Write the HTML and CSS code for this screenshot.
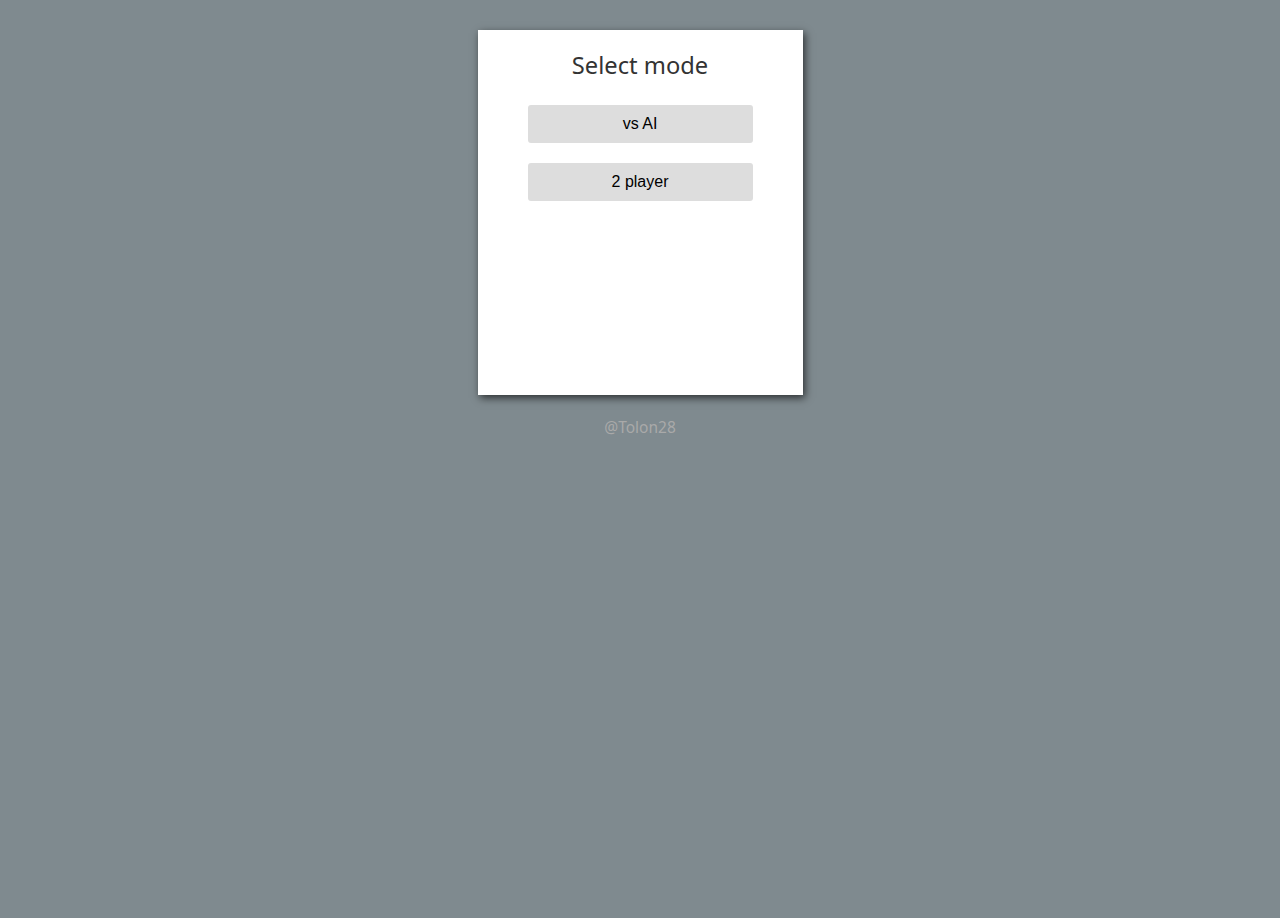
FILE: index.html
```html
<!DOCTYPE html>
<html>
<head>
<meta charset="utf-8">
<link rel="stylesheet" href="styles.css">
</head>
<body>
<div class="page">
  <div class="card">
    <h1 class="title">Select mode</h1>
    <button class="btn">vs AI</button>
    <button class="btn">2 player</button>
  </div>
  <div class="credit">@Tolon28</div>
</div>
</body>
</html>
```
FILE: styles.css
```css
html, body {
  margin: 0;
  padding: 0;
  background: #7f8a8f;
  height: 100%;
}
.page {
  display: flex;
  flex-direction: column;
  align-items: center;
  padding-top: 30px;
}
.card {
  width: 325px;
  height: 365px;
  box-sizing: border-box;
  background: #fff;
  box-shadow: 2px 3px 8px rgba(0,0,0,0.65);
  display: flex;
  flex-direction: column;
  align-items: center;
  padding-top: 17px;
}
.title {
  margin: 0 0 22px 0;
  font-family: "Noto Sans", sans-serif;
  font-weight: 400;
  font-size: 23.7px;
  line-height: 36px;
  color: #333;
}
.btn {
  width: 225px;
  height: 38px;
  border: none;
  border-radius: 3px;
  background: #ddd;
  font-family: "Liberation Sans", Arial, sans-serif;
  font-size: 16px;
  color: #000;
  margin-bottom: 20px;
  padding: 0;
}
.credit {
  margin-top: 22px;
  font-family: "Noto Sans", sans-serif;
  font-size: 15.5px;
  line-height: 20px;
  color: #a9a9a9;
}
```
